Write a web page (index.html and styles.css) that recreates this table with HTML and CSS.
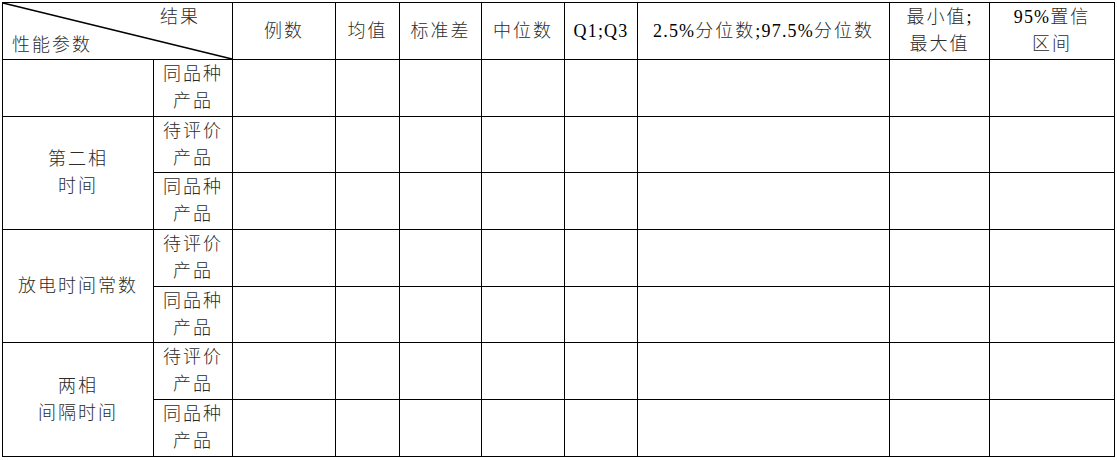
FILE: index.html
```html
<!DOCTYPE html>
<html lang="zh-CN">
<head>
<meta charset="utf-8">
<title>性能参数统计表</title>
<link rel="stylesheet" href="styles.css">
</head>
<body>
<table class="stats">
  <colgroup>
    <col class="c1"><col class="c2"><col class="c3"><col class="c4"><col class="c5">
    <col class="c6"><col class="c7"><col class="c8"><col class="c9"><col class="c10">
  </colgroup>
  <thead>
    <tr class="r-head">
      <th colspan="2" class="diag">
        <svg class="diag-line" viewBox="0 0 100 100" preserveAspectRatio="none" aria-hidden="true">
          <line x1="0" y1="0" x2="100" y2="100" vector-effect="non-scaling-stroke"></line>
        </svg>
        <div class="diag-text">
          <span class="diag-top">结果</span>
          <span class="diag-bottom">性能参数</span>
        </div>
      </th>
      <th>例数</th>
      <th>均值</th>
      <th>标准差</th>
      <th>中位数</th>
      <th><span class="lat">Q1;Q3</span></th>
      <th><span class="lat">2.5%</span>分位数<span class="lat">;97.5%</span>分位数</th>
      <th>最小值<span class="lat">;</span><br>最大值</th>
      <th><span class="lat">95%</span>置信<br>区间</th>
    </tr>
  </thead>
  <tbody>
    <tr class="r57">
      <td></td><td class="sub">同品种<br>产品</td>
      <td></td><td></td><td></td><td></td><td></td><td></td><td></td><td></td>
    </tr>
    <tr class="r56">
      <td rowspan="2">第二相<br>时间</td><td class="sub">待评价<br>产品</td>
      <td></td><td></td><td></td><td></td><td></td><td></td><td></td><td></td>
    </tr>
    <tr class="r57">
      <td class="sub">同品种<br>产品</td>
      <td></td><td></td><td></td><td></td><td></td><td></td><td></td><td></td>
    </tr>
    <tr class="r57">
      <td rowspan="2">放电时间常数</td><td class="sub">待评价<br>产品</td>
      <td></td><td></td><td></td><td></td><td></td><td></td><td></td><td></td>
    </tr>
    <tr class="r56">
      <td class="sub">同品种<br>产品</td>
      <td></td><td></td><td></td><td></td><td></td><td></td><td></td><td></td>
    </tr>
    <tr class="r57">
      <td rowspan="2">两相<br>间隔时间</td><td class="sub">待评价<br>产品</td>
      <td></td><td></td><td></td><td></td><td></td><td></td><td></td><td></td>
    </tr>
    <tr class="r57">
      <td class="sub">同品种<br>产品</td>
      <td></td><td></td><td></td><td></td><td></td><td></td><td></td><td></td>
    </tr>
  </tbody>
</table>
</body>
</html>
```

FILE: styles.css
```css
html, body {
  margin: 0;
  padding: 0;
  background: #fff;
}

body {
  padding: 2px 0 0 2px;
  font-family: "Liberation Serif", "Noto Sans CJK SC", serif;
  font-size: 18px;
  font-weight: 300;
  color: #2b2b2b;
}

.stats {
  border-collapse: collapse;
  table-layout: fixed;
  width: 1113px;
}

.c1 { width: 151px; }
.c2 { width: 79px; }
.c3 { width: 103px; }
.c4 { width: 64px; }
.c5 { width: 82px; }
.c6 { width: 83px; }
.c7 { width: 73px; }
.c8 { width: 252px; }
.c9 { width: 100px; }
.c10 { width: 125px; }

.stats th,
.stats td {
  border: 1.5px solid #000;
  padding: 0;
  text-align: center;
  vertical-align: middle;
  font-weight: 300;
  line-height: 27px;
  letter-spacing: 2px;
}

.lat {
  color: #000;
  font-weight: normal;
  letter-spacing: 1.2px;
}

.r-head { height: 57px; }
.r57 { height: 57px; }
.r56 { height: 56px; }

.diag {
  position: relative;
}

.diag-line {
  position: absolute;
  left: 0;
  top: 0;
  width: 100%;
  height: 100%;
  overflow: visible;
}

.diag-line line {
  stroke: #000;
  stroke-width: 1.5px;
}

.diag-text {
  display: flex;
  flex-direction: column;
  line-height: 28px;
}

.diag-top {
  text-align: right;
  padding-right: 32px;
}

.diag-bottom {
  text-align: left;
  padding-left: 9px;
}
```
